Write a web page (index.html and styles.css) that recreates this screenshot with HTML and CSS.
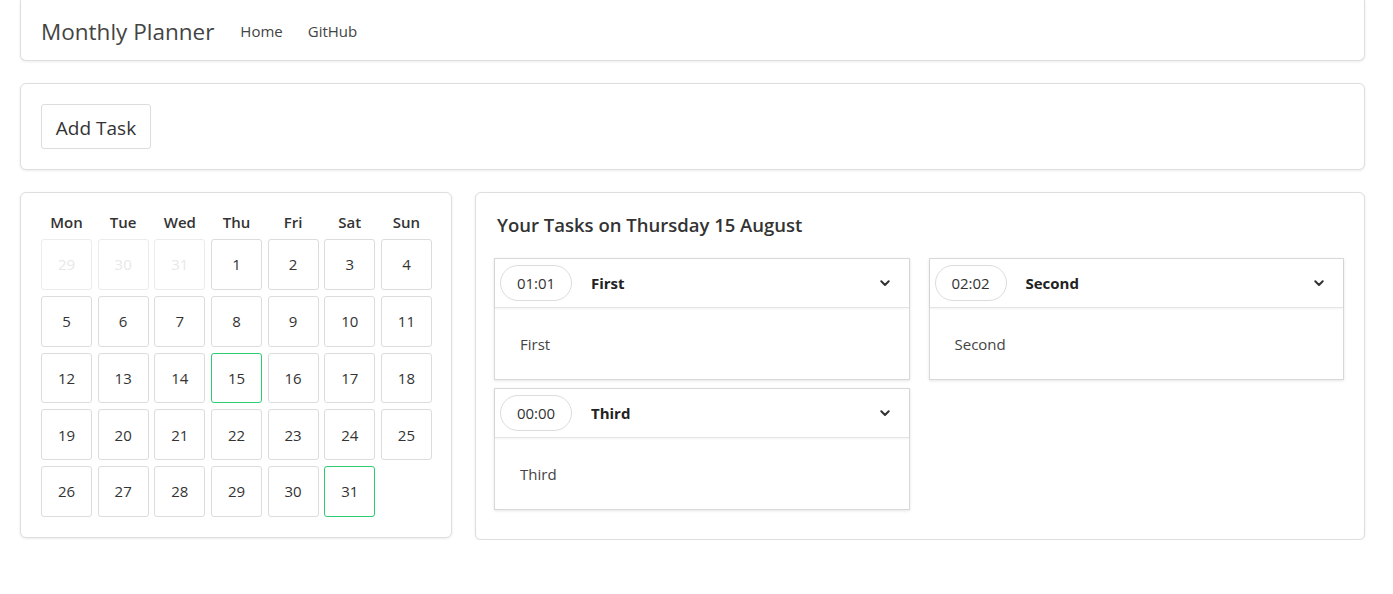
FILE: index.html
```html
<!DOCTYPE html>
<html>
<head>
<meta charset="utf-8">
<link rel="stylesheet" href="styles.css">
</head>
<body>
<div class="page">
  <nav class="card navbar">
    <span class="brand">Monthly Planner</span>
    <a class="nav-link">Home</a>
    <a class="nav-link">GitHub</a>
  </nav>

  <div class="card toolbar">
    <button class="btn">Add Task</button>
  </div>

  <div class="main">
    <div class="card calendar">
      <div class="cal-grid">
        <div class="dow">Mon</div><div class="dow">Tue</div><div class="dow">Wed</div><div class="dow">Thu</div><div class="dow">Fri</div><div class="dow">Sat</div><div class="dow">Sun</div>
        <div class="day muted">29</div><div class="day muted">30</div><div class="day muted">31</div><div class="day">1</div><div class="day">2</div><div class="day">3</div><div class="day">4</div>
        <div class="day">5</div><div class="day">6</div><div class="day">7</div><div class="day">8</div><div class="day">9</div><div class="day">10</div><div class="day">11</div>
        <div class="day">12</div><div class="day">13</div><div class="day">14</div><div class="day active">15</div><div class="day">16</div><div class="day">17</div><div class="day">18</div>
        <div class="day">19</div><div class="day">20</div><div class="day">21</div><div class="day">22</div><div class="day">23</div><div class="day">24</div><div class="day">25</div>
        <div class="day">26</div><div class="day">27</div><div class="day">28</div><div class="day">29</div><div class="day">30</div><div class="day active">31</div>
      </div>
    </div>

    <div class="card tasks">
      <h2 class="tasks-title">Your Tasks on Thursday 15 August</h2>
      <div class="task-grid">
        <div class="task">
          <div class="task-head">
            <span class="time">01:01</span>
            <span class="task-name">First</span>
            <svg class="chev" viewBox="0 0 10 7" width="10" height="7"><path d="M1.3 1.3 L5 5 L8.7 1.3" fill="none" stroke="#333" stroke-width="2" stroke-linecap="round" stroke-linejoin="round"/></svg>
          </div>
          <div class="task-body">First</div>
        </div>
        <div class="task">
          <div class="task-head">
            <span class="time">02:02</span>
            <span class="task-name">Second</span>
            <svg class="chev" viewBox="0 0 10 7" width="10" height="7"><path d="M1.3 1.3 L5 5 L8.7 1.3" fill="none" stroke="#333" stroke-width="2" stroke-linecap="round" stroke-linejoin="round"/></svg>
          </div>
          <div class="task-body">Second</div>
        </div>
        <div class="task">
          <div class="task-head">
            <span class="time">00:00</span>
            <span class="task-name">Third</span>
            <svg class="chev" viewBox="0 0 10 7" width="10" height="7"><path d="M1.3 1.3 L5 5 L8.7 1.3" fill="none" stroke="#333" stroke-width="2" stroke-linecap="round" stroke-linejoin="round"/></svg>
          </div>
          <div class="task-body">Third</div>
        </div>
      </div>
    </div>
  </div>
</div>
</body>
</html>
```

FILE: styles.css
```css
* { box-sizing: border-box; }
html, body { margin: 0; padding: 0; background: #fff; }
body {
  font-family: "Open Sans", "Noto Sans", sans-serif;
  color: #333;
  font-size: 15px;
}
.page {
  padding: 0 28px 0 20px;
  display: flex;
  flex-direction: column;
  gap: 22px;
}
.card {
  background: #fff;
  border: 1px solid #dedede;
  border-radius: 6px;
  box-shadow: 0 1px 3px rgba(0,0,0,0.08);
}
.navbar {
  border-top: none;
  border-radius: 0 0 6px 6px;
  height: 61px;
  display: flex;
  align-items: center;
  padding: 0 20px;
}
.brand {
  font-size: 22.5px;
  color: #444;
  margin-right: 26px;
  padding-top: 2px;
}
.nav-link {
  font-size: 15px;
  color: #444;
  margin-right: 25px;
  padding-top: 1px;
}
.toolbar {
  padding: 20px;
}
.btn {
  display: block;
  font-family: inherit;
  font-size: 19px;
  color: #333;
  background: #fff;
  border: 1px solid #dcdcdc;
  border-radius: 3px;
  height: 45px;
  width: 110px;
  padding: 2px 0 0 0;
  cursor: pointer;
}
.main {
  display: flex;
  gap: 23px;
  align-items: flex-start;
}
.calendar {
  width: 432px;
  flex: none;
  padding: 20px;
}
.cal-grid {
  display: grid;
  grid-template-columns: repeat(7, 51px);
  grid-template-rows: 20px;
  grid-auto-rows: 51.75px;
  column-gap: 5.67px;
  row-gap: 5px;
}
.cal-grid .dow {
  height: 22px;
  align-self: end;
  text-align: center;
  font-size: 15px;
  font-weight: 600;
  color: #333;
  margin-bottom: -1px;
}
.day {
  border: 1px solid #dcdcdc;
  border-radius: 3px;
  display: flex;
  align-items: center;
  justify-content: center;
  font-size: 15px;
  color: #333;
  margin-top: 1px;
}
.day.muted { color: #e8e8e8; border-color: #ececec; }
.day.active { border-color: #2ecc71; }
.tasks {
  flex: 1;
  padding: 19px 20px 29px 18px;
}
.tasks-title {
  margin: 0 0 21px 3px;
  font-size: 18.5px;
  font-weight: 600;
  color: #333;
  line-height: 25px;
}
.task-grid {
  display: grid;
  grid-template-columns: 1fr 1fr;
  column-gap: 19px;
  row-gap: 8px;
  align-items: start;
}
.task {
  border: 1px solid #d8d8d8;
  box-shadow: 0 1px 3px rgba(0,0,0,0.1);
  background: #fff;
}
.task-head {
  height: 49px;
  display: flex;
  align-items: center;
  padding: 0 19px 0 5px;
  border-bottom: 1px solid #e4e4e4;
  box-shadow: 0 1px 2px rgba(0,0,0,0.05);
}
.time {
  width: 72px;
  height: 36px;
  border: 1px solid #dcdcdc;
  border-radius: 18px;
  display: flex;
  align-items: center;
  justify-content: center;
  font-size: 15px;
  color: #333;
}
.task-name {
  margin-left: 19px;
  font-weight: 700;
  font-size: 15px;
  color: #222;
  flex: 1;
}
.chev { display: block; }
.task-body {
  height: 71px;
  display: flex;
  align-items: center;
  padding: 0 25px;
  font-size: 15px;
  color: #444;
}
```
